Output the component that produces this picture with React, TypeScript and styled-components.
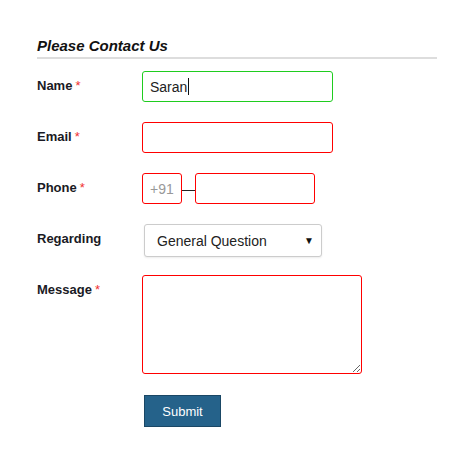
import styled, { createGlobalStyle } from 'styled-components';

const GlobalStyle = createGlobalStyle`
  html, body { margin: 0; padding: 0; background: #fff; }
  body { font-family: "Liberation Sans", Arial, sans-serif; color: #222; }
`;

const Page = styled.div`
  width: 462px; height: 466px; box-sizing: border-box;
  padding: 37px 25px 0 37px;
`;

const Heading = styled.h2`
  margin: 0; font-size: 15px; line-height: 18px;
  font-weight: bold; font-style: italic; color: #111;
  padding-bottom: 2px; border-bottom: 2px solid #ddd;
`;

const Form = styled.form`
  display: flex; flex-direction: column; gap: 20px;
  margin-top: 12px;
`;

const Row = styled.div<{ $shift?: number }>`
  display: flex; align-items: flex-start;
  margin-top: ${(p) => p.$shift ?? 0}px;
`;

const Label = styled.label`
  width: 105px; flex-shrink: 0;
  padding-top: 7px;
  font-size: 13px; line-height: 15px; font-weight: bold; color: #1a1a24;
`;

const Req = styled.span`
  color: #f03030; font-weight: normal; margin-left: 3px;
`;

const Box = styled.div<{ $ok?: boolean; $w: number }>`
  box-sizing: border-box; width: ${(p) => p.$w}px; height: 31px;
  border: 1px solid ${(p) => (p.$ok ? '#1fcc1f' : '#ff0000')};
  border-radius: 3px; background: #fff;
  display: flex; align-items: center; padding: 0 7px;
  font-size: 14px; color: #222;
`;

const Caret = styled.span`
  display: inline-block; width: 1px; height: 17px; background: #111; margin-left: 1px;
`;

const Code = styled.span`
  color: #999; font-size: 14px;
`;

const Dash = styled.span`
  width: 13px; height: 1px; background: #222; margin-top: 17px;
`;

const PhoneGroup = styled.div`
  display: flex; align-items: flex-start;
`;

const Select = styled.div`
  box-sizing: border-box; width: 178px; height: 33px; margin-left: 2px;
  border: 1px solid #ccc; border-radius: 3px; background: #fff;
  box-shadow: 0 1px 2px rgba(0, 0, 0, 0.08);
  display: flex; align-items: center; justify-content: space-between;
  padding: 0 7px 0 12px; font-size: 14px; color: #222;
`;

const Arrow = styled.span`
  font-size: 10px; color: #111;
`;

const TextArea = styled.textarea`
  box-sizing: border-box; width: 220px; height: 99px;
  border: 1px solid #ff0000; border-radius: 3px; outline: none;
  margin: 0; padding: 4px; font-family: inherit;
`;

const Submit = styled.button`
  box-sizing: border-box; width: 77px; height: 32px; margin-left: 107px;
  background: #25628a; border: 1px solid #1a4765; border-radius: 0;
  color: #fff; font-family: inherit; font-size: 13px; cursor: pointer;
`;

export default function App() {
  return (
    <Page>
      <GlobalStyle />
      <Heading>Please Contact Us</Heading>
      <Form onSubmit={(e) => e.preventDefault()}>
        <Row>
          <Label>Name<Req>*</Req></Label>
          <Box $ok $w={191}>Saran<Caret /></Box>
        </Row>
        <Row>
          <Label>Email<Req>*</Req></Label>
          <Box $w={191} />
        </Row>
        <Row>
          <Label>Phone<Req>*</Req></Label>
          <PhoneGroup>
            <Box $w={40}><Code>+91</Code></Box>
            <Dash />
            <Box $w={120} />
          </PhoneGroup>
        </Row>
        <Row>
          <Label>Regarding</Label>
          <Select>General Question<Arrow>▼</Arrow></Select>
        </Row>
        <Row $shift={-2}>
          <Label>Message<Req>*</Req></Label>
          <TextArea />
        </Row>
        <Row $shift={1}>
          <Submit type="submit">Submit</Submit>
        </Row>
      </Form>
    </Page>
  );
}
